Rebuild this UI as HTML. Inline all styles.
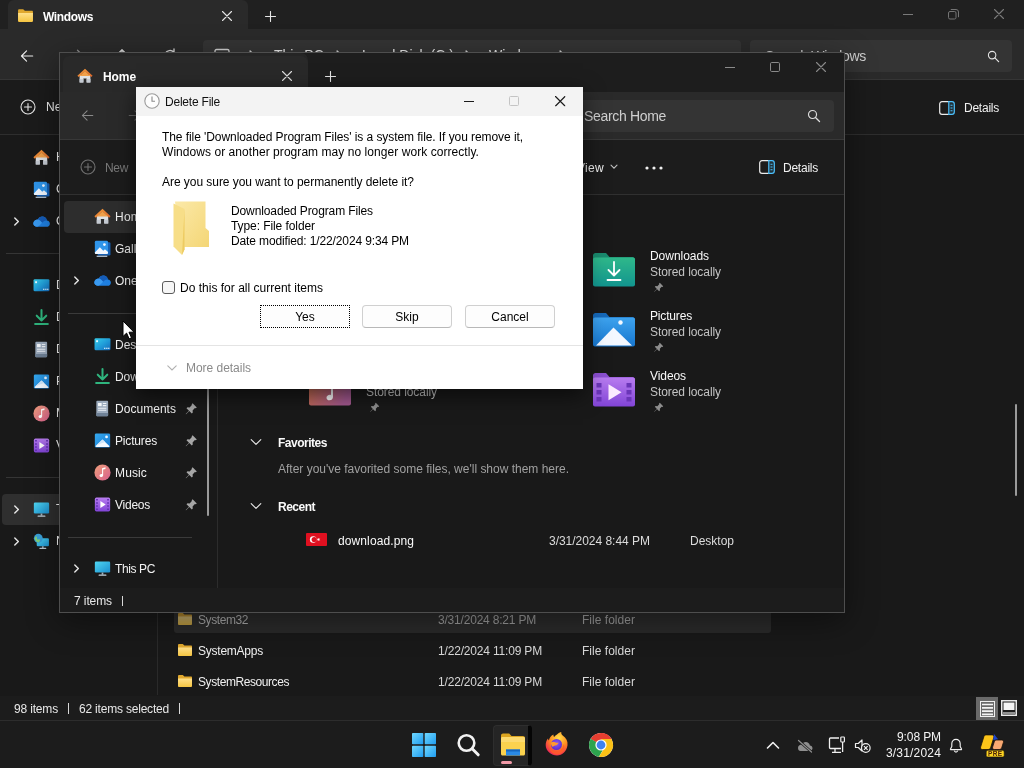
<!DOCTYPE html>
<html lang="en">
<head>
<meta charset="utf-8">
<title>Delete File</title>
<style>
*{box-sizing:border-box;margin:0;padding:0}
html,body{width:1024px;height:768px;overflow:hidden;background:#191919}
body{position:relative;font-family:"Liberation Sans",sans-serif;font-size:12px;color:#fff;-webkit-font-smoothing:antialiased}
.abs{position:absolute}
.t{will-change:transform;position:absolute;white-space:nowrap;line-height:16px;height:16px;transform-origin:0 50%}
.b{font-weight:bold}
svg{position:absolute;overflow:visible}
/* ---------- background window ---------- */
#bg{position:absolute;left:0;top:0;width:1024px;height:720px;background:#191919}
/* ---------- taskbar ---------- */
#taskbar{position:absolute;left:0;top:720px;width:1024px;height:48px;background:#1c1c1c;border-top:1px solid #2d2d2d}
/* ---------- home window ---------- */
#home{position:absolute;left:59px;top:52px;width:786px;height:561px;overflow:hidden;background:#191919;border:1px solid #4e4e4e;box-shadow:0 8px 30px rgba(0,0,0,.42)}
/* ---------- dialog ---------- */
#dlg{position:absolute;left:136px;top:87px;width:447px;height:302px;background:#fff;color:#000;box-shadow:0 6px 20px rgba(0,0,0,.6)}
</style>
</head>
<body>
<svg width="0" height="0" style="position:absolute">
<defs>
<linearGradient id="gFold" x1="0" y1="0" x2="0" y2="1"><stop offset="0" stop-color="#ffe08a"/><stop offset="1" stop-color="#f5c542"/></linearGradient>
<linearGradient id="gRoof" x1="0" y1="0" x2="1" y2="1"><stop offset="0" stop-color="#f7a13c"/><stop offset="1" stop-color="#d9622b"/></linearGradient>
<linearGradient id="gMusic" x1="0" y1="0" x2="1" y2="1"><stop offset="0" stop-color="#f0a07c"/><stop offset="1" stop-color="#d65e8c"/></linearGradient>
<linearGradient id="gVid" x1="0" y1="0" x2="0" y2="1"><stop offset="0" stop-color="#b87cf0"/><stop offset="1" stop-color="#8144d6"/></linearGradient>
<linearGradient id="gPic" x1="0" y1="0" x2="0" y2="1"><stop offset="0" stop-color="#3ea3ee"/><stop offset="1" stop-color="#1676cf"/></linearGradient>
<linearGradient id="gDl" x1="0" y1="0" x2="0" y2="1"><stop offset="0" stop-color="#2fb88a"/><stop offset="1" stop-color="#12958f"/></linearGradient>
<linearGradient id="gMon" x1="0" y1="0" x2="1" y2="1"><stop offset="0" stop-color="#4fd6f2"/><stop offset="1" stop-color="#1b8fd0"/></linearGradient>
<symbol id="i-folder" viewBox="0 0 16 16"><path d="M1 3.2c0-.7.5-1.2 1.2-1.2h3.6l1.6 1.6H14c.6 0 1 .4 1 1V12.8c0 .7-.5 1.2-1.2 1.2H2.2C1.5 14 1 13.500 1 12.800z" fill="#e0a82e"/><path d="M1 5.600h14v7.200c0 .7-.5 1.200-1.200 1.200H2.200c-.7 0-1.200-.5-1.200-1.200z" fill="url(#gFold)"/></symbol>
<symbol id="i-home" viewBox="0 0 16 16"><path d="M2.600 7h10.800v7.600H9.600v-4.200H6.400v4.200H2.600z" fill="#dfe1e4"/><path d="M2.600 11h10.800v3.600H9.600v-3.600H6.400v3.600H2.600z" fill="#c3c9d1"/><path d="M8 .8l7.600 6.900-1.300 1.400L8 3.500 1.700 9.100.4 7.700z" fill="url(#gRoof)"/><path d="M8 3.200l5.400 4.800H2.600z" fill="#f0a04a"/></symbol>
<symbol id="i-gallery" viewBox="0 0 16 16"><rect x="3.500" y="2.200" width="12" height="12.300" rx="1.200" fill="#1660b4"/><rect x=".8" y=".8" width="12.400" height="12.400" rx="1.200" fill="#2f95ea"/><path d="M.8 11.800l4.700-5 3.200 3.300 1.600-1.500 2.900 2.800v.6c0 .7-.5 1.200-1.200 1.200H2c-.7 0-1.200-.5-1.200-1.200z" fill="#f1f7ff"/><circle cx="9.800" cy="4.300" r="1.300" fill="#f1f7ff"/><path d="M2.500 15.300h10" stroke="#cfe4fa" stroke-width="1"/></symbol>
<symbol id="i-cloud" viewBox="0 0 16 16"><path d="M3.900 13h8.800c1.800 0 3.200-1.300 3.200-3 0-1.600-1.200-2.900-2.800-3C12.700 4.800 10.900 3.400 8.800 3.400 7 3.400 5.400 4.400 4.700 6 2.400 6 .5 7.600.3 9.600.2 11.500 1.900 13 3.900 13z" fill="#1f7fe0"/><path d="M4.700 6C5.400 4.400 7 3.400 8.800 3.400c2.100 0 3.900 1.400 4.300 3.600-2.600-.3-3.800 1.400-4.600 2.200C7.500 8 6.200 6.100 4.700 6z" fill="#155cb8"/><path d="M.3 9.600C.5 7.600 2.400 6 4.700 6c1.500.1 2.800 2 3.800 3.200C7.300 10.500 5.500 13 3.900 13 1.900 13 .2 11.500.3 9.600z" fill="#3a9af0"/></symbol>
<symbol id="i-desktop" viewBox="0 0 16 16"><defs><linearGradient id="gDesk" x1="0" y1="0" x2="1" y2="1"><stop offset="0" stop-color="#35cdea"/><stop offset=".55" stop-color="#1f9ad8"/><stop offset="1" stop-color="#1668b8"/></linearGradient></defs><rect x=".5" y="2" width="15" height="11.500" rx="1.300" fill="url(#gDesk)"/><rect x="2" y="4" width="1.800" height="1.800" fill="#e6fbff"/><rect x="9.500" y="11" width="1.200" height="1.200" fill="#d6f1ff"/><rect x="11.500" y="11" width="1.200" height="1.200" fill="#d6f1ff"/><rect x="13.300" y="11" width="1.200" height="1.200" fill="#d6f1ff"/></symbol>
<symbol id="i-download" viewBox="0 0 16 16"><path d="M8 1v9.500M3.500 6.300L8 10.800l4.500-4.500M2 14.200h12" fill="none" stroke="#2fb57e" stroke-width="1.900" stroke-linecap="round" stroke-linejoin="round"/></symbol>
<symbol id="i-doc" viewBox="0 0 16 16"><path d="M3 .8h9.500c.4 0 .8.300.8.800V14.400c0 .4-.3.800-.8.800H3c-.4 0-.8-.3-.8-.8V1.600c0-.4.300-.8.800-.8z" fill="#9cabbd"/><path d="M2.200 12.300h11.100v2.100c0 .4-.3.800-.8.800H3c-.4 0-.8-.3-.8-.8z" fill="#6f8196"/><rect x="3.800" y="2.800" width="3.400" height="3" fill="#f4f7fa"/><path d="M8.300 3.300h3.300M8.300 5.300h3.300M3.800 7.700h7.800M3.800 9.700h7.800" stroke="#eef2f7" stroke-width="1"/></symbol>
<symbol id="i-pictures" viewBox="0 0 16 16"><defs><linearGradient id="gPic2" x1="0" y1="0" x2="1" y2="1"><stop offset="0" stop-color="#35aaf0"/><stop offset="1" stop-color="#1878d0"/></linearGradient></defs><rect x=".8" y="1.300" width="14.400" height="13.400" rx="1.300" fill="url(#gPic2)"/><path d="M1.500 13.200L8 7l6.500 6.200v.2c0 .5-.4.800-.8.800H2.300c-.5 0-.8-.4-.8-.8z" fill="#f4f9ff"/><path d="M1.500 13.200L8 7l2.500 2.400C8 10 5 11.500 1.500 13.200z" fill="#cfe6fb"/><circle cx="11.800" cy="4.600" r="1.300" fill="#eaf5ff"/></symbol>
<symbol id="i-music" viewBox="0 0 16 16"><circle cx="8" cy="8" r="7.600" fill="url(#gMusic)"/><path d="M7.600 3.900l3.200-.9v1.600l-2.200.6v5.300c0 1-.8 1.700-1.800 1.700s-1.600-.6-1.600-1.400.8-1.500 1.700-1.500c.2 0 .5 0 .7.100z" fill="#fff"/></symbol>
<symbol id="i-videos" viewBox="0 0 16 16"><rect x=".8" y="1.500" width="14.400" height="13" rx="1.500" fill="url(#gVid)"/><path d="M6 4.800l5 3.200-5 3.200z" fill="#fff"/><path d="M2 3.500h1.600M2 6.500h1.600M2 9.500h1.600M2 12.500h1.600M12.400 3.500H14M12.400 6.500H14M12.400 9.500H14M12.400 12.500H14" stroke="#5f2fb0" stroke-width="1.400"/></symbol>
<symbol id="i-pc" viewBox="0 0 16 16"><rect x=".8" y="1.500" width="14.400" height="10.300" rx="1.100" fill="url(#gMon)"/><rect x="7.200" y="11.800" width="1.600" height="2" fill="#9fb3c2"/><rect x="4.300" y="13.600" width="7.400" height="1.300" rx=".5" fill="#c2d0da"/></symbol>
<symbol id="i-net" viewBox="0 0 16 16"><rect x="3.500" y="5" width="11.500" height="7.500" rx="1" fill="url(#gMon)"/><rect x="8.400" y="12.500" width="1.600" height="1.500" fill="#9fb3c2"/><rect x="6" y="13.800" width="6.500" height="1.200" rx=".5" fill="#b8c7d3"/><circle cx="5" cy="5" r="4.200" fill="#3aa0d8"/><path d="M2.500 3c1 .3 1.500 1.200 1.200 2-.3.800.7 1.500 1.500 1 .8-.5 1.800.3 1.300 1.300L5.500 9 3 8 1.500 5.500z" fill="#7ed07a"/></symbol>
<symbol id="i-pin" viewBox="0 0 16 16"><path d="M9.600 2.200l4.200 4.200-1 .9-.9-.2-2.300 2.300.2 2.100-1 1-2.500-2.500L3 13.300l-.3-.3L6 9.700 3.500 7.200l1-1 2.100.2 2.300-2.300-.2-.9z" fill="currentColor"/></symbol>
<symbol id="i-chevr" viewBox="0 0 16 16"><path d="M5.500 2.800L10.700 8l-5.200 5.200" fill="none" stroke="currentColor" stroke-width="2" stroke-linecap="round" stroke-linejoin="round"/></symbol>
<symbol id="i-chevd" viewBox="0 0 16 16"><path d="M2.500 5.200L8 10.700l5.500-5.500" fill="none" stroke="currentColor" stroke-width="1.300" stroke-linecap="round" stroke-linejoin="round"/></symbol>
<symbol id="i-x" viewBox="0 0 10 10"><path d="M.5.500l9 9M9.500.5l-9 9" fill="none" stroke="currentColor" stroke-width="1.100" stroke-linecap="round"/></symbol>
<symbol id="i-plus" viewBox="0 0 11 11"><path d="M5.500 .5v10M.5 5.500h10" fill="none" stroke="currentColor" stroke-width="1.100" stroke-linecap="round"/></symbol>
<symbol id="i-back" viewBox="0 0 16 16"><path d="M14.500 8H1.800M7.500 2.200L1.700 8l5.800 5.800" fill="none" stroke="currentColor" stroke-width="1.300" stroke-linecap="round" stroke-linejoin="round"/></symbol>
<symbol id="i-new" viewBox="0 0 16 16"><circle cx="8" cy="8" r="7" fill="none" stroke="currentColor" stroke-width="1.100"/><path d="M8 4.500v7M4.500 8h7" stroke="currentColor" stroke-width="1.100" stroke-linecap="round"/></symbol>
<symbol id="i-details" viewBox="0 0 16 14"><path d="M9.800 .7H3A2.300 2.300 0 0 0 .7 3v8A2.300 2.300 0 0 0 3 13.300h6.800" fill="none" stroke="#ececec" stroke-width="1.200"/><path d="M9.800 .7H13A2.300 2.300 0 0 1 15.300 3v8A2.300 2.300 0 0 1 13 13.300H9.800z" fill="#4cc2ff" fill-opacity=".12" stroke="#4cc2ff" stroke-width="1.200"/><path d="M11.500 4.300h2M11.500 7h2M11.500 9.700h2" stroke="#4cc2ff" stroke-width="1.100"/></symbol>
<symbol id="i-search" viewBox="0 0 16 16"><circle cx="6.300" cy="6.300" r="4.600" fill="none" stroke="currentColor" stroke-width="1.300"/><path d="M9.700 9.700l4.600 4.600" stroke="currentColor" stroke-width="1.500" stroke-linecap="round"/></symbol>
</defs></svg>
<div id="bg">
<div class="abs" style="left:0px;top:0px;width:1024px;height:29px;background:#202020"></div>
<div class="abs" style="left:8px;top:0px;width:240px;height:32px;background:#2a2a2a;border-radius:6px 6px 0 0"></div>
<svg width="17" height="17" style="left:16.5px;top:7px"><use href="#i-folder"/></svg>
<div class="t b" style="left:43px;top:9px;letter-spacing:-0.366px;">Windows</div>
<svg width="10" height="10" style="left:222px;top:11px;color:#e6e6e6"><use href="#i-x"/></svg>
<svg width="11" height="11" style="left:265px;top:11px;color:#e6e6e6"><use href="#i-plus"/></svg>
<div class="abs" style="left:903px;top:14px;width:10px;height:1px;background:#7a7a7a"></div>
<svg width="11" height="11" style="left:947.5px;top:9px;"><rect x="0.5" y="2.500" width="7.500" height="7.500" rx="1.500" fill="none" stroke="#747474"/><path d="M2.800 .5h5.200a2.500 2.500 0 0 1 2.500 2.500v5.200" fill="none" stroke="#747474"/></svg>
<svg width="10" height="10" style="left:994px;top:9px;color:#7a7a7a"><use href="#i-x"/></svg>
<div class="abs" style="left:0px;top:29px;width:1024px;height:51px;background:#2a2a2a;border-bottom:1px solid #353535"></div>
<svg width="14" height="14" style="left:20px;top:49px;color:#ececec"><use href="#i-back"/></svg>
<svg width="16" height="16" style="left:69px;top:48px;color:#8c8c8c;transform:scaleX(-1)"><use href="#i-back"/></svg>
<svg width="16" height="16" style="left:114px;top:48px;color:#d8d8d8;transform:rotate(90deg)"><use href="#i-back"/></svg>
<svg width="16" height="16" style="left:162px;top:48px;"><path d="M13.500 8A5.500 5.500 0 1 1 11.800 4M12 1v3.300H8.700" fill="none" stroke="#d8d8d8" stroke-width="1.300" stroke-linecap="round"/></svg>
<div class="abs" style="left:203px;top:40px;width:538px;height:32px;background:#343434;border-radius:4px"></div>
<svg width="16" height="16" style="left:214px;top:48px;"><rect x="1" y="1.500" width="14" height="10" rx="1.500" fill="none" stroke="#d0d0d0" stroke-width="1.300"/><path d="M5 14.500h6" stroke="#d0d0d0" stroke-width="1.300"/></svg>
<svg width="12" height="12" style="left:246px;top:49px;color:#cfcfcf"><use href="#i-chevr"/></svg>
<svg width="12" height="12" style="left:333px;top:49px;color:#cfcfcf"><use href="#i-chevr"/></svg>
<svg width="12" height="12" style="left:462px;top:49px;color:#cfcfcf"><use href="#i-chevr"/></svg>
<svg width="12" height="12" style="left:556px;top:49px;color:#cfcfcf"><use href="#i-chevr"/></svg>
<div class="t " style="left:274px;top:47px;font-size:14px;color:#e8e8e8">This PC</div>
<div class="t " style="left:362px;top:47px;font-size:14px;color:#e8e8e8">Local Disk (C:)</div>
<div class="t " style="left:489px;top:47px;font-size:14px;color:#e8e8e8">Windows</div>
<div class="abs" style="left:750px;top:40px;width:262px;height:32px;background:#343434;border-radius:4px"></div>
<div class="t " style="left:764.5px;top:48px;letter-spacing:-0.289px;font-size:14px;color:#cfcfcf">Search Windows</div>
<svg width="13" height="13" style="left:987px;top:49.5px;color:#e6e6e6"><use href="#i-search"/></svg>
<div class="abs" style="left:0px;top:80px;width:1024px;height:55px;background:#1b1b1b;border-bottom:1px solid #2e2e2e"></div>
<svg width="16" height="16" style="left:20px;top:99px;color:#e4e4e4"><use href="#i-new"/></svg>
<div class="t " style="left:46px;top:99px;color:#f0f0f0">New</div>
<svg width="16" height="14" style="left:939px;top:101px"><use href="#i-details"/></svg>
<div class="t " style="left:963.5px;top:99.5px;letter-spacing:-0.241px;color:#f0f0f0">Details</div>
<div class="abs" style="left:2px;top:494px;width:152px;height:31px;background:#2f2f2f;border-radius:4px"></div>
<svg width="17" height="17" style="left:32.5px;top:148.5px"><use href="#i-home"/></svg>
<div class="t " style="left:56px;top:149px;">Home</div>
<svg width="17" height="17" style="left:32.5px;top:180.5px"><use href="#i-gallery"/></svg>
<div class="t " style="left:56px;top:181px;">Gallery</div>
<svg width="17" height="17" style="left:32.5px;top:212.5px"><use href="#i-cloud"/></svg>
<div class="t " style="left:56px;top:213px;">OneDrive</div>
<svg width="11" height="11" style="left:10.5px;top:215.5px;color:#e8e8e8"><use href="#i-chevr"/></svg>
<svg width="17" height="17" style="left:32.5px;top:276.5px"><use href="#i-desktop"/></svg>
<div class="t " style="left:56px;top:277px;">Desktop</div>
<svg width="17" height="17" style="left:32.5px;top:308.5px"><use href="#i-download"/></svg>
<div class="t " style="left:56px;top:309px;">Downloads</div>
<svg width="17" height="17" style="left:32.5px;top:340.5px"><use href="#i-doc"/></svg>
<div class="t " style="left:56px;top:341px;">Documents</div>
<svg width="17" height="17" style="left:32.5px;top:372.5px"><use href="#i-pictures"/></svg>
<div class="t " style="left:56px;top:373px;">Pictures</div>
<svg width="17" height="17" style="left:32.5px;top:404.5px"><use href="#i-music"/></svg>
<div class="t " style="left:56px;top:405px;">Music</div>
<svg width="17" height="17" style="left:32.5px;top:436.5px"><use href="#i-videos"/></svg>
<div class="t " style="left:56px;top:437px;">Videos</div>
<svg width="17" height="17" style="left:32.5px;top:500.5px"><use href="#i-pc"/></svg>
<div class="t " style="left:56px;top:501px;">This PC</div>
<svg width="11" height="11" style="left:10.5px;top:503.5px;color:#e8e8e8"><use href="#i-chevr"/></svg>
<svg width="17" height="17" style="left:32.5px;top:532.5px"><use href="#i-net"/></svg>
<div class="t " style="left:56px;top:533px;">Network</div>
<svg width="11" height="11" style="left:10.5px;top:535.5px;color:#e8e8e8"><use href="#i-chevr"/></svg>
<div class="abs" style="left:6px;top:253px;width:146px;height:1px;background:#353535"></div>
<div class="abs" style="left:6px;top:477px;width:146px;height:1px;background:#353535"></div>
<div class="abs" style="left:157px;top:135px;width:1px;height:560px;background:#2a2a2a"></div>
<div class="abs" style="left:174px;top:605px;width:597px;height:28px;background:#2a2a2a;border-radius:3px"></div>
<svg width="16" height="16" style="left:177px;top:611px;opacity:.7"><use href="#i-folder"/></svg>
<div class="t " style="left:198px;top:611.5px;letter-spacing:-0.420px;color:#a8a8a8">System32</div>
<div class="t " style="left:438px;top:611.5px;letter-spacing:-0.201px;color:#9a9a9a">3/31/2024 8:21 PM</div>
<div class="t " style="left:582px;top:611.5px;letter-spacing:0.028px;color:#9a9a9a">File folder</div>
<svg width="16" height="16" style="left:177px;top:642px"><use href="#i-folder"/></svg>
<div class="t " style="left:198px;top:642.5px;letter-spacing:-0.236px;color:#f0f0f0">SystemApps</div>
<div class="t " style="left:438px;top:642.5px;letter-spacing:-0.178px;color:#d8d8d8">1/22/2024 11:09 PM</div>
<div class="t " style="left:582px;top:642.5px;letter-spacing:0.028px;color:#d8d8d8">File folder</div>
<svg width="16" height="16" style="left:177px;top:673px"><use href="#i-folder"/></svg>
<div class="t " style="left:198px;top:673.5px;letter-spacing:-0.425px;color:#f0f0f0">SystemResources</div>
<div class="t " style="left:438px;top:673.5px;letter-spacing:-0.178px;color:#d8d8d8">1/22/2024 11:09 PM</div>
<div class="t " style="left:582px;top:673.5px;letter-spacing:0.028px;color:#d8d8d8">File folder</div>
<div class="abs" style="left:1015px;top:404px;width:2px;height:92px;background:#9a9a9a;border-radius:1px"></div>
<div class="abs" style="left:0px;top:696px;width:1024px;height:24px;background:#1c1c1c"></div>
<div class="t " style="left:14px;top:700.5px;letter-spacing:-0.170px;color:#e8e8e8">98 items</div>
<div class="abs" style="left:68px;top:703px;width:1px;height:11px;background:#d8d8d8"></div>
<div class="t " style="left:79px;top:700.5px;letter-spacing:-0.199px;color:#e8e8e8">62 items selected</div>
<div class="abs" style="left:179px;top:703px;width:1px;height:11px;background:#d8d8d8"></div>
<div class="abs" style="left:976px;top:697px;width:22px;height:23px;background:#6a6a6a"></div>
<svg width="15" height="16" style="left:980px;top:701px;"><rect x=".5" y=".5" width="14" height="15" fill="none" stroke="#f0f0f0"/><path d="M2 3.500h11M2 6.800h11M2 10.100h11M2 13.300h11" stroke="#f4f4f4" stroke-width="1.700"/></svg>
<svg width="16" height="16" style="left:1001px;top:700px;"><rect x=".75" y=".75" width="14.500" height="14.500" fill="none" stroke="#e8e8e8" stroke-width="1.500"/><rect x="2.500" y="2.500" width="11" height="7.500" fill="#f4f4f4"/><path d="M2 13h12" stroke="#e0e0e0" stroke-width="1.200"/></svg>
</div>
<div id="taskbar">
<svg width="24" height="24" style="left:412px;top:12px;"><defs><linearGradient id="gWin" x1="0" y1="0" x2="1" y2="1"><stop offset="0" stop-color="#6fd8ff"/><stop offset="1" stop-color="#1f9cf0"/></linearGradient></defs><rect x="0" y="0" width="11.300" height="11.300" rx=".8" fill="url(#gWin)"/><rect x="12.700" y="0" width="11.300" height="11.300" rx=".8" fill="url(#gWin)"/><rect x="0" y="12.700" width="11.300" height="11.300" rx=".8" fill="url(#gWin)"/><rect x="12.700" y="12.700" width="11.300" height="11.300" rx=".8" fill="url(#gWin)"/></svg>
<svg width="26" height="26" style="left:456px;top:11px;"><circle cx="10.500" cy="11" r="7.800" fill="none" stroke="#f2f2f2" stroke-width="2.600"/><path d="M16.200 16.800l6 6" stroke="#f2f2f2" stroke-width="3" stroke-linecap="round"/></svg>
<div class="abs" style="left:493px;top:4px;width:39px;height:41px;background:#252525;border-radius:4px;border:1px solid #2e2e2e;border-right:4px solid #050505"></div>
<svg width="24" height="24" style="left:501px;top:12px;"><path d="M0 2.500C0 1.400.9.500 2 .500h6.200l2.300 2.500H22c1.100 0 2 .9 2 2V8H0z" fill="#dca520"/><path d="M0 5.500c0-.8.700-1.500 1.500-1.500h21c.8 0 1.500.7 1.500 1.500V21c0 .8-.7 1.500-1.500 1.500h-21C.7 22.500 0 21.800 0 21z" fill="#fbd24e"/><path d="M0 5.500c0-.8.700-1.500 1.500-1.500h21c.8 0 1.500.7 1.500 1.500V9H0z" fill="#fde08a" fill-opacity=".55"/><path d="M5 16.500h14v6H5z" fill="#2a8ae6"/><path d="M5 16.500h14v2H5z" fill="#1466c0"/></svg>
<div class="abs" style="left:501px;top:40px;width:11px;height:3px;background:#f29aa8;border-radius:1.500px"></div>
<svg width="26" height="26" style="left:544px;top:10px;"><defs><radialGradient id="gFx" cx=".6" cy=".25" r=".9"><stop offset="0" stop-color="#ffe14a"/><stop offset=".45" stop-color="#ff8a1f"/><stop offset=".8" stop-color="#f2304f"/><stop offset="1" stop-color="#c51a8a"/></radialGradient><radialGradient id="gFx2" cx=".5" cy=".4" r=".6"><stop offset="0" stop-color="#8a5cf5"/><stop offset="1" stop-color="#5a2bd0"/></radialGradient></defs><path d="M13 3.500c1.500-1.500 3-2.200 4.300-2.500-.3 1.300.2 2.500 1.400 3.600 3.500 2.400 5.300 5.700 4.800 9.700C22.800 20 18.500 24.500 13 24.500S1.700 20 1.700 14.200c0-2.800.8-5.200 2.300-6.800.1 1 .4 1.700.9 2.200C5.200 7 7 4.500 9.500 3.500c-.2 1 .1 1.800.6 2.400C11 5 12 4.200 13 3.500z" fill="url(#gFx)"/><circle cx="12.500" cy="13.500" r="5.500" fill="url(#gFx2)"/><path d="M7 11.500c1.500-1 3-1 4.200-.2 1 .7 2.300.6 3.300.2-.3 1.800-1.700 2.800-3.300 2.900-1.200.1-2 .7-2.200 1.600C7.800 15.300 6.800 13.500 7 11.500z" fill="#ff9a2e"/><path d="M5 16c2 4 7 5.500 11 3.200 2.300-1.300 3.500-3.700 3.500-6.200 2 3.500.5 8-3.500 10-4.500 2.200-9.800-.5-11-7z" fill="#ff5a2a" fill-opacity=".85"/></svg>
<svg width="26" height="26" style="left:588px;top:11px;"><circle cx="13" cy="13" r="12" fill="#fff"/><path d="M13 13L2.600 7A12 12 0 0 1 23.400 7z" fill="#e53e30"/><path d="M13 1A12 12 0 0 1 23.400 7H13z" fill="#e53e30"/><path d="M2.600 7A12 12 0 0 0 11 24.800L16.500 15 13 13z" fill="#2da44e"/><path d="M23.400 7A12 12 0 0 1 11 24.800L18.200 13 13 7z" fill="#fbc116"/><path d="M2.600 7L7.800 16 13 13z" fill="#2da44e"/><circle cx="13" cy="13" r="5.600" fill="#fff"/><circle cx="13" cy="13" r="4.400" fill="#3f82f0"/></svg>
<svg width="14" height="10" style="left:766px;top:19px;"><path d="M1.500 8L7 2.500 12.500 8" fill="none" stroke="#f0f0f0" stroke-width="1.600" stroke-linecap="round" stroke-linejoin="round"/></svg>
<svg width="18" height="14" style="left:796px;top:18px;"><path d="M4.500 12h9c1.700 0 3-1.200 3-2.700 0-1.400-1.100-2.600-2.600-2.700C13.500 4.400 11.800 3 9.800 3 8 3 6.500 4 5.900 5.500 3.700 5.500 2 7 2 9c0 1.700 1.100 3 2.500 3z" fill="#8f8f8f"/><path d="M2.500 1.500l13 11.500" stroke="#1c1c1c" stroke-width="2.600"/><path d="M2.500 1.500l13 11.500" stroke="#8f8f8f" stroke-width="1.200" stroke-linecap="round"/></svg>
<svg width="18" height="18" style="left:828px;top:15px;"><path d="M11 2H2.500C1.900 2 1.500 2.400 1.500 3v8.500c0 .6.400 1 1 1H13" fill="none" stroke="#f0f0f0" stroke-width="1.300"/><path d="M7 12.500V16M4 16.300h9" stroke="#f0f0f0" stroke-width="1.300"/><rect x="12.800" y="1" width="3.600" height="5" rx=".8" fill="none" stroke="#f0f0f0" stroke-width="1.200"/><path d="M14.600 6v10" stroke="#f0f0f0" stroke-width="1.300"/></svg>
<svg width="18" height="16" style="left:854px;top:17px;"><path d="M1.500 5.500h2.800L8 2v11L4.300 9.500H1.500z" fill="none" stroke="#f0f0f0" stroke-width="1.200" stroke-linejoin="round"/><circle cx="11.800" cy="10" r="4.300" fill="#1c1c1c" stroke="#f0f0f0" stroke-width="1.200"/><path d="M10 8.200l3.600 3.600M13.600 8.200L10 11.800" stroke="#f0f0f0" stroke-width="1.200"/></svg>
<div class="t " style="right:83px;top:7.5px;letter-spacing:-0.100px;color:#f4f4f4">9:08 PM</div>
<div class="t " style="right:83px;top:24px;letter-spacing:0.179px;color:#f4f4f4">3/31/2024</div>
<svg width="14" height="16" style="left:949px;top:16.5px;"><g transform="scale(.875)"><path d="M8 1.500c-2.800 0-4.800 2.200-4.800 5v3.300L1.700 12.500c-.2.400 0 .8.500.8h11.600c.5 0 .7-.4.500-.8l-1.500-2.700V6.500c0-2.800-2-5-4.800-5z" fill="none" stroke="#f0f0f0" stroke-width="1.300" stroke-linejoin="round"/><path d="M6 14.500c.3 1 1.100 1.600 2 1.600s1.700-.6 2-1.600" fill="none" stroke="#f0f0f0" stroke-width="1.300"/></g></svg>
<svg width="26" height="26" style="left:979px;top:11px;will-change:transform"><path d="M7.200 2.900h6c1.300 0 2.100 1.100 1.700 2.400l-3.300 10.500c-.4 1.100-1.400 1.700-2.500 1.700H3.300c-1.300 0-2.100-1.100-1.700-2.400L4.900 4.600c.3-1 1.300-1.700 2.300-1.700z" fill="#fcc419" stroke="#1a1208" stroke-width=".8"/><path d="M15 1.900l4.300 5.700-5.100.5z" fill="#1d43c8"/><path d="M17.800 8h4.900c1.300 0 2.100 1.100 1.700 2.400l-1.700 5.400c-.4 1.100-1.400 1.700-2.500 1.700h-4.900c-1.300 0-2.100-1.100-1.700-2.400l1.700-5.400c.3-1 1.300-1.700 2.500-1.700z" fill="#f7a872" stroke="#1a1208" stroke-width=".8"/><rect x="7.200" y="18.300" width="18" height="6.700" rx="1.600" fill="#fcd422" stroke="#1a1208" stroke-width=".6"/><text x="16.200" y="23.900" font-family="Liberation Sans,sans-serif" font-size="6.500" font-weight="bold" text-anchor="middle" fill="#4a2208" letter-spacing=".4">PRE</text></svg>
</div>
<div id="home">
<div class="abs" style="left:0px;top:0px;width:784px;height:39px;background:#1d1d1d"></div>
<div class="abs" style="left:0px;top:0px;width:248px;height:39px;background:#252525;border-radius:0 7px 0 0"></div>
<div class="abs" style="left:3px;top:3px;width:245px;height:36px;background:#292929;border-radius:6px 7px 0 0"></div>
<div class="abs" style="left:0px;top:39px;width:784px;height:48px;background:#2a2a2a;border-bottom:1px solid #383838"></div>
<div class="abs" style="left:0px;top:87px;width:784px;height:55px;background:#1c1c1c;border-bottom:1px solid #303030"></div>
<svg width="16" height="16" style="left:17px;top:15px"><use href="#i-home"/></svg>
<div class="t b" style="left:43px;top:15.5px;letter-spacing:-0.086px;">Home</div>
<svg width="10" height="10" style="left:222px;top:18px;color:#e0e0e0"><use href="#i-x"/></svg>
<svg width="11" height="11" style="left:265px;top:18px;color:#e6e6e6"><use href="#i-plus"/></svg>
<div class="abs" style="left:665px;top:14px;width:10px;height:1px;background:#8a8a8a"></div>
<svg width="10" height="10" style="left:710px;top:9px;"><rect x=".5" y=".5" width="9" height="9" rx="1.200" fill="none" stroke="#8a8a8a"/></svg>
<svg width="10" height="10" style="left:756px;top:9px;color:#8a8a8a"><use href="#i-x"/></svg>
<svg width="13" height="13" style="left:20.5px;top:56px;color:#8a8a8a"><use href="#i-back"/></svg>
<svg width="13" height="13" style="left:68px;top:56px;color:#6a6a6a;transform:scaleX(-1)"><use href="#i-back"/></svg>
<div class="abs" style="left:514px;top:47px;width:260px;height:32px;background:#343434;border-radius:4px"></div>
<div class="t " style="left:524px;top:55px;letter-spacing:-0.327px;font-size:14px;color:#cfcfcf">Search Home</div>
<svg width="14" height="14" style="left:747px;top:56px;color:#dedede"><use href="#i-search"/></svg>
<svg width="16" height="16" style="left:20.3px;top:106px;color:#707070"><use href="#i-new"/></svg>
<div class="t " style="left:45.3px;top:106.5px;letter-spacing:-0.339px;color:#7a7a7a">New</div>
<div class="t " style="left:517px;top:106.5px;letter-spacing:0.301px;color:#f0f0f0">View</div>
<svg width="8" height="6" style="left:550px;top:111px;"><path d="M1 1.200l3 3 3-3" fill="none" stroke="#bdbdbd" stroke-width="1.100" stroke-linecap="round"/></svg>
<svg width="18" height="4" style="left:585px;top:112.5px;"><circle cx="2" cy="2" r="1.600" fill="#f0f0f0"/><circle cx="9" cy="2" r="1.600" fill="#f0f0f0"/><circle cx="16" cy="2" r="1.600" fill="#f0f0f0"/></svg>
<svg width="16" height="14" style="left:699px;top:107px"><use href="#i-details"/></svg>
<div class="t " style="left:723px;top:106.5px;letter-spacing:-0.241px;color:#f0f0f0">Details</div>
<div class="abs" style="left:4px;top:148px;width:142px;height:32px;background:#2d2d2d;border-radius:4px"></div>
<svg width="17" height="17" style="left:33.5px;top:155px"><use href="#i-home"/></svg>
<div class="t " style="left:55px;top:155.5px;letter-spacing:0.246px;color:#f2f2f2">Home</div>
<svg width="17" height="17" style="left:33.5px;top:187px"><use href="#i-gallery"/></svg>
<div class="t " style="left:55px;top:187.5px;letter-spacing:-0.002px;color:#f2f2f2">Gallery</div>
<svg width="17" height="17" style="left:33.5px;top:219px"><use href="#i-cloud"/></svg>
<div class="t " style="left:55px;top:219.5px;letter-spacing:0.039px;color:#f2f2f2">OneDrive</div>
<svg width="11" height="11" style="left:10.5px;top:222px;color:#e8e8e8"><use href="#i-chevr"/></svg>
<svg width="17" height="17" style="left:33.5px;top:283px"><use href="#i-desktop"/></svg>
<div class="t " style="left:55px;top:283.5px;letter-spacing:-0.004px;color:#f2f2f2">Desktop</div>
<svg width="16" height="16" style="left:122.5px;top:284px;color:#a6a6a6"><use href="#i-pin"/></svg>
<svg width="17" height="17" style="left:33.5px;top:315px"><use href="#i-download"/></svg>
<div class="t " style="left:55px;top:315.5px;letter-spacing:-0.042px;color:#f2f2f2">Downloads</div>
<svg width="16" height="16" style="left:122.5px;top:316px;color:#a6a6a6"><use href="#i-pin"/></svg>
<svg width="17" height="17" style="left:33.5px;top:347px"><use href="#i-doc"/></svg>
<div class="t " style="left:55px;top:347.5px;letter-spacing:0.033px;color:#f2f2f2">Documents</div>
<svg width="16" height="16" style="left:122.5px;top:348px;color:#a6a6a6"><use href="#i-pin"/></svg>
<svg width="17" height="17" style="left:33.5px;top:379px"><use href="#i-pictures"/></svg>
<div class="t " style="left:55px;top:379.5px;letter-spacing:-0.170px;color:#f2f2f2">Pictures</div>
<svg width="16" height="16" style="left:122.5px;top:380px;color:#a6a6a6"><use href="#i-pin"/></svg>
<svg width="17" height="17" style="left:33.5px;top:411px"><use href="#i-music"/></svg>
<div class="t " style="left:55px;top:411.5px;letter-spacing:0.131px;color:#f2f2f2">Music</div>
<svg width="16" height="16" style="left:122.5px;top:412px;color:#a6a6a6"><use href="#i-pin"/></svg>
<svg width="17" height="17" style="left:33.5px;top:443px"><use href="#i-videos"/></svg>
<div class="t " style="left:55px;top:443.5px;letter-spacing:-0.247px;color:#f2f2f2">Videos</div>
<svg width="16" height="16" style="left:122.5px;top:444px;color:#a6a6a6"><use href="#i-pin"/></svg>
<svg width="17" height="17" style="left:33.5px;top:507px"><use href="#i-pc"/></svg>
<div class="t " style="left:55px;top:507.5px;letter-spacing:-0.384px;color:#f2f2f2">This PC</div>
<svg width="11" height="11" style="left:10.5px;top:510px;color:#e8e8e8"><use href="#i-chevr"/></svg>
<div class="abs" style="left:8px;top:260px;width:124px;height:1px;background:#3a3a3a"></div>
<div class="abs" style="left:8px;top:484px;width:124px;height:1px;background:#3a3a3a"></div>
<div class="abs" style="left:147px;top:143px;width:2px;height:320px;background:#9a9a9a;border-radius:1px"></div>
<div class="abs" style="left:157px;top:142px;width:1px;height:393px;background:#2c2c2c"></div>
<svg width="42" height="34" style="left:533px;top:200px;"><defs><linearGradient id="gBdl" x1="0" y1="0" x2="0" y2="1"><stop offset="0" stop-color="#2fb88a"/><stop offset="1" stop-color="#12958f"/></linearGradient></defs><path d="M0 2.500C0 1.100 1.100 0 2.500 0h10.500l3.500 4H39.500c1.400 0 2.500 1.100 2.500 2.500V10H0z" fill="#1a8a6e"/><path d="M0 6.500c0-1.100.9-2 2-2h38c1.100 0 2 .9 2 2v25c0 1.100-.9 2-2 2H2c-1.100 0-2-.9-2-2z" fill="url(#gBdl)"/><path d="M21 9v13M15.500 17l5.500 5.500 5.500-5.500M14.500 27h13" fill="none" stroke="#fff" stroke-width="1.800" stroke-linecap="round" stroke-linejoin="round"/></svg>
<svg width="42" height="34" style="left:533px;top:260px;"><defs><linearGradient id="gBpic" x1="0" y1="0" x2="0" y2="1"><stop offset="0" stop-color="#3ea3ee"/><stop offset="1" stop-color="#1676cf"/></linearGradient></defs><path d="M0 2.500C0 1.100 1.100 0 2.500 0h10.500l3.500 4H39.500c1.400 0 2.500 1.100 2.500 2.500V10H0z" fill="#1668b8"/><path d="M0 6.500c0-1.100.9-2 2-2h38c1.100 0 2 .9 2 2v25c0 1.100-.9 2-2 2H2c-1.100 0-2-.9-2-2z" fill="url(#gBpic)"/><path d="M3 32.500L20.500 14.500 39 32.500z" fill="#f4f8ff"/><circle cx="27.500" cy="9.500" r="2.200" fill="#f4f8ff"/></svg>
<svg width="42" height="34" style="left:533px;top:320px;"><defs><linearGradient id="gBvid" x1="0" y1="0" x2="0" y2="1"><stop offset="0" stop-color="#b87cf0"/><stop offset="1" stop-color="#8144d6"/></linearGradient></defs><path d="M0 2.500C0 1.100 1.100 0 2.500 0h10.500l3.500 4H39.500c1.400 0 2.500 1.100 2.500 2.500V10H0z" fill="#8a4fd0"/><path d="M0 6.500c0-1.100.9-2 2-2h38c1.100 0 2 .9 2 2v25c0 1.100-.9 2-2 2H2c-1.100 0-2-.9-2-2z" fill="url(#gBvid)"/><path d="M15.500 11.200l13 8-13 8z" fill="#fbeaff"/><path d="M3.500 10h5v4.500h-5zM3.500 17h5v4.500h-5zM3.500 24h5v4.500h-5zM33.500 10h5v4.500h-5zM33.500 17h5v4.500h-5zM33.500 24h5v4.500h-5z" fill="#6a35b8"/></svg>
<svg width="42" height="34" style="left:249px;top:319px;"><defs><linearGradient id="gBmus" x1="0" y1="0" x2="1" y2=".3"><stop offset="0" stop-color="#c66c4c"/><stop offset="1" stop-color="#a2588e"/></linearGradient></defs><path d="M0 2.500C0 1.100 1.100 0 2.500 0h10.500l3.500 4H39.500c1.400 0 2.500 1.100 2.500 2.500V10H0z" fill="#b8664a"/><path d="M0 6.500c0-1.100.9-2 2-2h38c1.100 0 2 .9 2 2v25c0 1.100-.9 2-2 2H2c-1.100 0-2-.9-2-2z" fill="url(#gBmus)"/><path d="M22 12l7-2v3.500l-5 1.500v10c0 2-1.600 3.300-3.500 3.300s-3-1.100-3-2.600 1.500-2.900 3.300-2.900c.4 0 .8 0 1.200.2z" fill="#fff"/></svg>
<div class="t " style="left:590px;top:194.5px;letter-spacing:-0.042px;color:#fafafa">Downloads</div>
<div class="t " style="left:590px;top:210.5px;letter-spacing:-0.075px;color:#c4c4c4">Stored locally</div>
<svg width="13" height="13" style="left:592px;top:228px;color:#8e8e8e"><use href="#i-pin"/></svg>
<div class="t " style="left:590px;top:254.5px;letter-spacing:-0.170px;color:#fafafa">Pictures</div>
<div class="t " style="left:590px;top:270.5px;letter-spacing:-0.075px;color:#c4c4c4">Stored locally</div>
<svg width="13" height="13" style="left:592px;top:288px;color:#8e8e8e"><use href="#i-pin"/></svg>
<div class="t " style="left:590px;top:314.5px;letter-spacing:-0.081px;color:#fafafa">Videos</div>
<div class="t " style="left:590px;top:330.5px;letter-spacing:-0.075px;color:#c4c4c4">Stored locally</div>
<svg width="13" height="13" style="left:592px;top:348px;color:#8e8e8e"><use href="#i-pin"/></svg>
<div class="t " style="left:306px;top:330.5px;letter-spacing:-0.075px;color:#c4c4c4">Stored locally</div>
<svg width="13" height="13" style="left:308px;top:348px;color:#8e8e8e"><use href="#i-pin"/></svg>
<svg width="14" height="14" style="left:189px;top:382px;color:#e8e8e8"><use href="#i-chevd"/></svg>
<div class="t b" style="left:218px;top:381.5px;letter-spacing:-0.484px;color:#fafafa">Favorites</div>
<div class="t " style="left:218px;top:407.5px;letter-spacing:-0.007px;color:#a0a0a0">After you've favorited some files, we'll show them here.</div>
<svg width="14" height="14" style="left:189px;top:446px;color:#e8e8e8"><use href="#i-chevd"/></svg>
<div class="t b" style="left:218px;top:445.5px;letter-spacing:-0.503px;color:#fafafa">Recent</div>
<svg width="21" height="13" style="left:246px;top:480px;"><rect width="21" height="13" rx="1" fill="#e01020"/><circle cx="7.200" cy="6.500" r="3.300" fill="#fff"/><circle cx="8.200" cy="6.500" r="2.600" fill="#e01020"/><path d="M11.200 6.500l2.400-.8-1.500 2V5.300l1.500 2z" fill="#fff" stroke="#fff" stroke-width=".4"/></svg>
<div class="t " style="left:278px;top:479.5px;letter-spacing:0.105px;color:#fafafa">download.png</div>
<div class="t " style="left:489px;top:479.5px;letter-spacing:-0.025px;color:#dcdcdc">3/31/2024 8:44 PM</div>
<div class="t " style="left:630px;top:479.5px;letter-spacing:-0.004px;color:#dcdcdc">Desktop</div>
<div class="abs" style="left:0px;top:535px;width:784px;height:24px;background:#1c1c1c"></div>
<div class="t " style="left:14px;top:540px;letter-spacing:-0.098px;color:#e8e8e8">7 items</div>
<div class="abs" style="left:62px;top:543px;width:1px;height:10px;background:#d8d8d8"></div>
</div>
<div id="dlg">
<div class="abs" style="left:0px;top:0px;width:447px;height:29px;background:#f3f3f3"></div>
<svg width="16" height="16" style="left:8px;top:6px;"><circle cx="8" cy="8" r="7.200" fill="#fdfdfd" stroke="#9a9a9a" stroke-width="1.100"/><path d="M8 3.500V8.300h3" fill="none" stroke="#8a8a8a" stroke-width="1.100"/></svg>
<div class="t " style="left:29px;top:7px;letter-spacing:-0.214px;color:#111">Delete File</div>
<div class="abs" style="left:328px;top:13.5px;width:10px;height:1.3px;background:#1a1a1a"></div>
<svg width="10" height="10" style="left:373px;top:9px;"><rect x=".5" y=".5" width="9" height="9" rx="1" fill="none" stroke="#c4c4c4"/></svg>
<svg width="10.5" height="10.5" style="left:419px;top:9px;color:#1a1a1a"><use href="#i-x"/></svg>
<div class="t " style="left:26px;top:42px;letter-spacing:-0.071px;">The file 'Downloaded Program Files' is a system file. If you remove it,</div>
<div class="t " style="left:26px;top:57px;letter-spacing:0.055px;">Windows or another program may no longer work correctly.</div>
<div class="t " style="left:26px;top:86.5px;letter-spacing:-0.046px;">Are you sure you want to permanently delete it?</div>
<svg width="38" height="56" style="left:36px;top:113px;"><defs><linearGradient id="gOF" x1="0" y1="0" x2="1" y2="1"><stop offset="0" stop-color="#fbe9a8"/><stop offset="1" stop-color="#f4d676"/></linearGradient></defs><path d="M3 1.500h30.500v26.500l3.500 3v16H9z" fill="url(#gOF)"/><path d="M1.500 3.500L12.500 9v40.500L10 55 1.500 46.500z" fill="#f7de88"/><path d="M12.500 9v40.500L10 55z" fill="#edcb62"/></svg>
<div class="t " style="left:95px;top:116px;letter-spacing:-0.114px;">Downloaded Program Files</div>
<div class="t " style="left:95px;top:131px;letter-spacing:-0.081px;">Type: File folder</div>
<div class="t " style="left:95px;top:146px;letter-spacing:-0.129px;">Date modified: 1/22/2024 9:34 PM</div>
<div class="abs" style="left:26px;top:194px;width:13px;height:13px;border:1px solid #5a5a5a;border-radius:3px;background:#f6f6f6"></div>
<div class="t " style="left:44px;top:193px;letter-spacing:0.010px;">Do this for all current items</div>
<div class="abs" style="left:124px;top:218px;width:90px;height:23px;border:1px dotted #000;border-radius:0;background:#fdfdfd"></div>
<div class="t " style="left:124px;top:221.5px;width:90px;text-align:center;color:#000">Yes</div>
<div class="abs" style="left:226px;top:218px;width:90px;height:23px;border:1px solid #d0d0d0;border-bottom-color:#b8b8b8;border-radius:4px;background:#fdfdfd"></div>
<div class="t " style="left:226px;top:221.5px;width:90px;text-align:center;color:#000">Skip</div>
<div class="abs" style="left:329px;top:218px;width:90px;height:23px;border:1px solid #d0d0d0;border-bottom-color:#b8b8b8;border-radius:4px;background:#fdfdfd"></div>
<div class="t " style="left:329px;top:221.5px;width:90px;text-align:center;color:#000">Cancel</div>
<div class="abs" style="left:0px;top:258px;width:447px;height:1px;background:#e4e4e4"></div>
<svg width="10" height="6" style="left:30.5px;top:277.5px;"><path d="M.8 .8l4.200 4.200L9.200 .8" fill="none" stroke="#b0b0b0" stroke-width="1.100" stroke-linecap="round"/></svg>
<div class="t " style="left:50px;top:273px;letter-spacing:-0.031px;color:#8a8a8a">More details</div>
</div>
<svg width="12" height="20" style="left:122px;top:320px"><path d="M1 1v15.500l3.600-3.400 2.500 5.700 2.400-1-2.500-5.600h5z" fill="#fff" stroke="#000" stroke-width="1" stroke-linejoin="round"/></svg>
</body>
</html>
